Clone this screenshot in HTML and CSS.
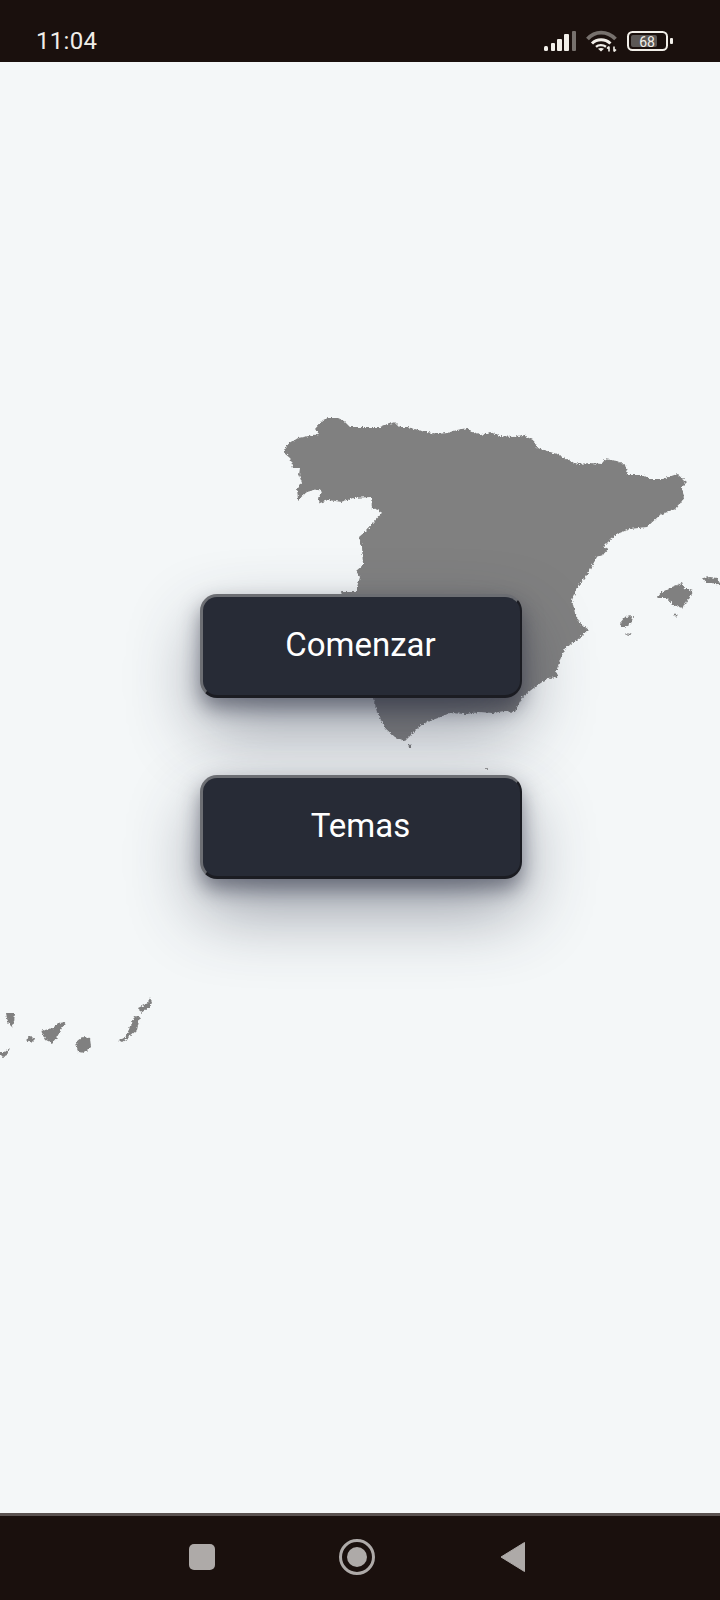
FILE: index.html
```html
<!DOCTYPE html>
<html lang="es">
<head>
    <meta charset="UTF-8">
    <title>Mapa</title>
    <link rel="stylesheet" href="styles.css">
</head>
<body>
<div id="screen">
    <div class="status">
        <span class="time">11:04</span>
        <div class="status-icons">
            <svg class="signal" width="32" height="21" viewBox="0 0 32 21">
                <rect x="0" y="15" width="4" height="5" rx="1.5" fill="#f2efe9"/>
                <rect x="7" y="12" width="4" height="8" rx="1" fill="#f2efe9"/>
                <rect x="13" y="8" width="5" height="12" rx="1" fill="#f2efe9"/>
                <rect x="20" y="3" width="5" height="17" rx="1" fill="#f2efe9"/>
                <rect x="28" y="0" width="4" height="20" rx="1" fill="#77716d"/>
            </svg>
            <svg class="wifi" width="31" height="22" viewBox="0 0 31 22" fill="none">
                <path d="M1.500 9C9 .5 21 .5 29.500 9" stroke="#77716d" stroke-width="3.800"/>
                <path d="M6 13.500C11 8.500 19 8.500 24.500 13.500" stroke="#f2efe9" stroke-width="3"/>
                <path d="M10 16.800C12.500 14.600 17 14.600 20 16.800" stroke="#f2efe9" stroke-width="2.400"/>
                <path d="M12 18.800L15 21.500L18 18.800C16 17.800 14 17.800 12 18.800Z" fill="#f2efe9"/>
                <path d="M23 21.500V16.500M21 18.500L23 16.500M28 16.500V21.500M28 21.500L30 19.500" stroke="#f2efe9" stroke-width="1.600"/>
            </svg>
            <svg class="battery" width="46" height="21" viewBox="0 0 46 21">
                <rect x="1" y="1" width="39" height="18" rx="4.500" fill="none" stroke="#f2efe9" stroke-width="2"/>
                <rect x="4" y="4" width="26" height="12" rx="2" fill="#5b5755"/>
                <rect x="43" y="7" width="3" height="6" rx="1" fill="#f2efe9"/>
                <text x="20" y="15.500" class="battery-num">68</text>
            </svg>
        </div>
    </div>

    <div class="main">
        <svg class="map" width="720" height="1451" viewBox="0 62 720 1451">
            <defs>
                <filter id="rough" filterUnits="userSpaceOnUse" x="0" y="62" width="720" height="1451" color-interpolation-filters="sRGB">
                    <feTurbulence type="fractalNoise" baseFrequency="0.45" numOctaves="2" seed="4" result="noise"/>
                    <feDisplacementMap in="SourceGraphic" in2="noise" scale="4" xChannelSelector="R" yChannelSelector="G"/>
                </filter>
            </defs>
            <g filter="url(#rough)" fill="#808080">
                <!-- peninsula -->
                <path d="M315 429L323 420L328 418L337 418L344 421L350 427L365 427L380 427L385 425L395 422L400 427L408 427L417 430L427 432L437 434L447 433L457 430L467 428L473 432L483 435L490 432L500 436L513 437L523 435L533 440L537 448L547 451L557 454L570 461L578 464L590 463L602 464L604 459L617 461L625 465L628 475L643 475L650 479L663 479L677 474L683 479L687 482L682 487L684 498L677 508L660 515L647 527L630 529L617 534L608 542L604 546L608 549L603 555L597 557L592 566L587 575L577 588L572 600L575 613L580 623L589 630L577 640L565 648L560 660L556 672L559 677L548 678L535 687L522 697L515 712L504 711L493 713L480 712L465 714L450 713L438 718L427 722L420 726L413 733L405 741L395 737L385 728L381 720L377 712L373 698L358 640L341 592L357 592L357 587L360 577L356 571L363 565L362 547L359 537L367 530L373 523L382 513L378 510L372 508L371 497L353 498L342 502L328 500L320 503L318 498L322 492L318 489L307 492L298 500L297 488L302 483L299 475L300 468L293 468L290 458L284 453L287 445L298 438L319 434Z"/>
                <!-- baleares -->
                <path d="M657 598L662 592L672 587L682 583L684 588L693 591L688 600L682 608L673 605L667 598Z"/>
                <path d="M703 578L710 577L717 578L722 587L713 583L707 583Z"/>
                <path d="M620 623L625 617L633 616L632 622L625 627L621 627Z"/>
                <path d="M625 633L632 634L628 636Z"/>
                <circle cx="676" cy="615" r="1.500"/>
                <circle cx="410" cy="746" r="1.500"/>
                <circle cx="487" cy="769" r="1"/>
                <!-- canarias -->
                <path d="M6 1013L15 1013L14 1022L12 1027L8 1023Z"/>
                <path d="M26 1039L30 1036L35 1039L31 1043Z"/>
                <path d="M41 1031L53 1028L58 1023L66 1022L62 1028L57 1037L52 1043L46 1040Z"/>
                <path d="M76 1042L82 1037L90 1038L91 1047L85 1053L78 1052Z"/>
                <path d="M118 1040L125 1038L132 1023L135 1016L140 1017L137 1030L128 1038L122 1042Z"/>
                <path d="M138 1008L148 1003L150 997L152 1003L148 1008L141 1013Z"/>
                <path d="M-2 1052L5 1052L10 1048L7 1055L3 1057Z"/>
            </g>
        </svg>
        <div class="menu">
            <button class="btn">Comenzar</button>
            <button class="btn">Temas</button>
        </div>
    </div>

    <div class="nav">
        <span class="nav-square"></span>
        <span class="nav-home"></span>
        <svg class="nav-back" width="26" height="30" viewBox="0 0 26 30">
            <path d="M1 15L24.500 .5V29.500Z" fill="#aeaaa8" stroke="#aeaaa8" stroke-linejoin="round"/>
        </svg>
    </div>
</div>
</body>
</html>
```

FILE: styles.css
```css
html,body{ margin:0;padding:0; }
body{ font-family:Roboto,"Liberation Sans",sans-serif; }
#screen{ width:720px;height:1600px;display:flex;flex-direction:column;background:#f4f7f8;overflow:hidden; }

.status{
    height:62px;
    box-sizing:border-box;
    background:#1a100d;
    display:flex;
    justify-content:space-between;
    align-items:flex-end;
    padding:0 47px 7px 36px;
    flex:none;
}
.time{ color:#f0ede8;font-size:24px;line-height:28px;letter-spacing:.3px; }
.status-icons{ display:flex;align-items:flex-end;gap:10px;margin-bottom:3px; }
.status-icons svg{ display:block; }
.battery-num{ fill:#f2efe9;font-size:14px;text-anchor:middle; }

.main{ flex:1;position:relative;background:#f4f7f8; }
.map{ position:absolute;left:0;top:0; }
.menu{
    position:relative;
    display:flex;
    flex-direction:column;
    align-items:flex-start;
    gap:77px;
    padding:532px 0 0 200px;
}
.btn{
    width:322px;
    height:104px;
    box-sizing:border-box;
    padding:0 2px 3px 0;
    background:#272b36;
    color:#fff;
    font-family:inherit;
    font-size:33px;
    border-style:solid;
    border-width:3px 2px 3px 3px;
    border-color:#6c6e73 #1b1c22 #1b1c22 #6c6e73;
    border-radius:17px;
    box-shadow:0 32px 70px rgba(45,50,70,.45),0 10px 20px rgba(35,38,55,.5);
}

.nav{
    height:87px;
    box-sizing:border-box;
    background:#1a100d;
    border-top:3px solid #5a5250;
    display:flex;
    align-items:center;
    padding:0 0 2px 189px;
    flex:none;
}
.nav-square{ width:26px;height:26px;border-radius:5px;background:#aeaaa8;margin-right:124px; }
.nav-home{
    width:36px;
    height:36px;
    box-sizing:border-box;
    border:3px solid #aeaaa8;
    border-radius:50%;
    margin-right:125px;
    display:flex;
    align-items:center;
    justify-content:center;
}
.nav-home::after{ content:"";width:20px;height:20px;border-radius:50%;background:#aeaaa8; }
```
